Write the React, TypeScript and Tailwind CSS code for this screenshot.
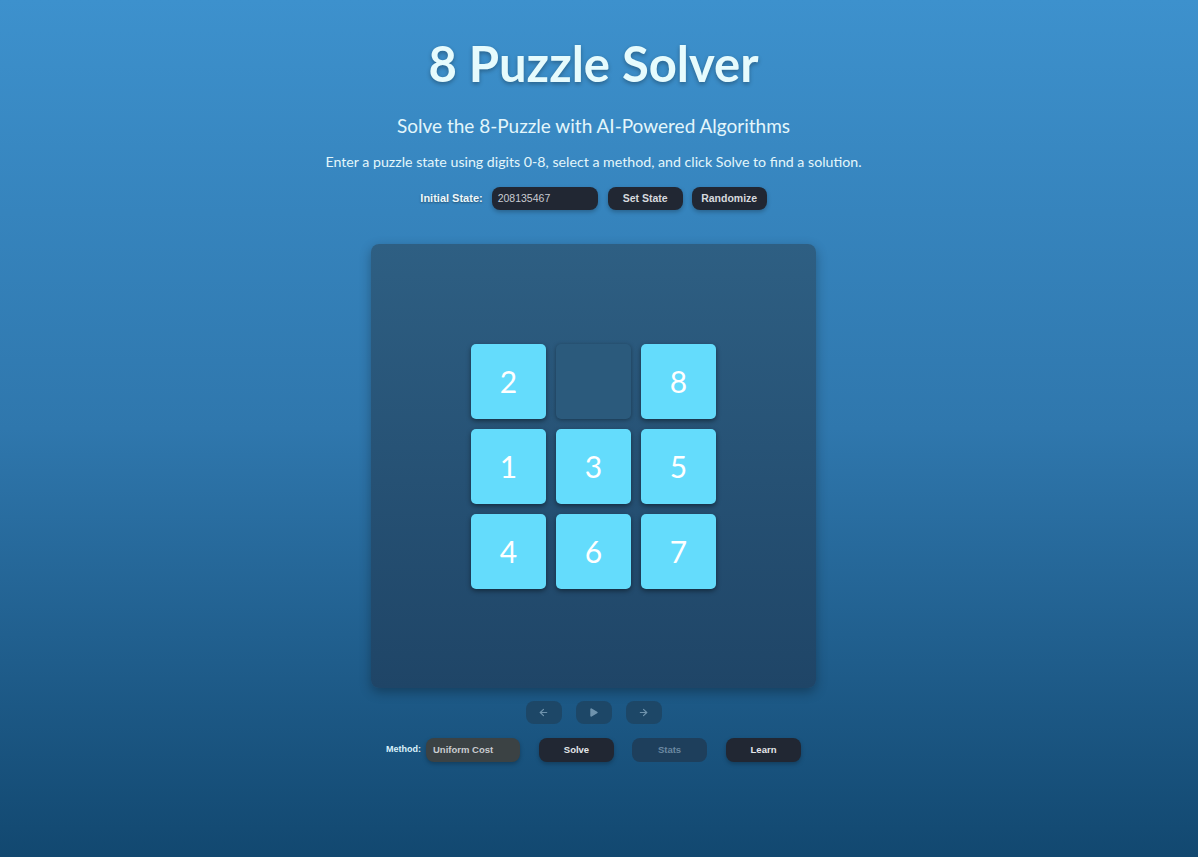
import { ArrowLeft, ArrowRight, Play } from "lucide-react";

const tiles = [2, 0, 8, 1, 3, 5, 4, 6, 7];

function Tile({ n }: { n: number }) {
  if (n === 0) {
    return <div className="w-[75px] h-[75px] rounded-[5px] bg-[#2b5a7c] shadow-[0_1px_4px_rgba(0,0,0,0.35)]" />;
  }
  return (
    <div className="w-[75px] h-[75px] rounded-[5px] bg-[#64dcfc] shadow-[0_2px_5px_rgba(0,0,0,0.45)] flex items-center justify-center text-white text-[30px] font-['Lato',sans-serif]">
      {n}
    </div>
  );
}

export default function App() {
  return (
    <div className="min-h-[857px] w-full pr-[11px] bg-gradient-to-b from-[#3d91cd] via-[#2f77ad] to-[#124870] flex flex-col items-center font-['Lato',sans-serif] text-[#e3f6fb]">
      <h1 className="mt-[34px] text-[49px] leading-[58px] font-bold text-[#e6fbfd] [text-shadow:0_2px_4px_rgba(0,0,0,0.3)]">
        8 Puzzle Solver
      </h1>
      <p className="mt-[21px] text-[19px] leading-[26px]">Solve the 8-Puzzle with AI-Powered Algorithms</p>
      <p className="mt-[13px] text-[14.2px] leading-[20px]">
        Enter a puzzle state using digits 0-8, select a method, and click Solve to find a solution.
      </p>

      <div className="mt-[15px] flex items-center font-['Liberation_Sans',Arial,sans-serif] text-[10.5px] font-bold">
        <span className="text-[11px] text-[#eef8fb] [text-shadow:0_1px_2px_rgba(0,0,0,0.4)]">Initial State:</span>
        <div className="ml-[9px] w-[106px] h-[23px] rounded-[8px] bg-[#212733] flex items-center px-[6px] font-normal text-[#c9ccd2] shadow-[0_2px_4px_rgba(0,0,0,0.25)]">
          208135467
        </div>
        <button className="ml-[10px] w-[75px] h-[23px] rounded-[8px] bg-[#212733] text-[#d6d9de] shadow-[0_2px_4px_rgba(0,0,0,0.25)]">
          Set State
        </button>
        <button className="ml-[9px] w-[75px] h-[23px] rounded-[8px] bg-[#212733] text-[#d6d9de] shadow-[0_2px_4px_rgba(0,0,0,0.25)]">
          Randomize
        </button>
      </div>

      <div className="mt-[34px] w-[445px] h-[444px] rounded-[8px] bg-gradient-to-b from-[#2e5f83] to-[#1f4567] shadow-[0_4px_12px_rgba(0,0,0,0.3)] flex items-center justify-center">
        <div className="grid grid-cols-3 gap-[10px]">
          {tiles.map((n, i) => (
            <Tile key={i} n={n} />
          ))}
        </div>
      </div>

      <div className="mt-[13px] flex gap-[14px]">
        <button className="w-[36px] h-[23px] rounded-[8px] bg-[#1d4767] flex items-center justify-center text-[#6f93ad]">
          <ArrowLeft size={11} strokeWidth={2.5} />
        </button>
        <button className="w-[36px] h-[23px] rounded-[8px] bg-[#1d4767] flex items-center justify-center text-[#6f93ad]">
          <Play size={11} fill="currentColor" strokeWidth={0} />
        </button>
        <button className="w-[36px] h-[23px] rounded-[8px] bg-[#1d4767] flex items-center justify-center text-[#6f93ad]">
          <ArrowRight size={11} strokeWidth={2.5} />
        </button>
      </div>

      <div className="mt-[14px] flex items-center font-['Liberation_Sans',Arial,sans-serif] text-[9.5px] font-bold">
        <span className="text-[9px] text-[#d9f2fb]">Method:</span>
        <div className="ml-[5px] w-[94px] h-[24px] rounded-[8px] bg-[#3b4244] flex items-center px-[7px] text-[#c9ccd0] shadow-[0_2px_4px_rgba(0,0,0,0.25)]">
          Uniform Cost
        </div>
        <button className="ml-[19px] w-[75px] h-[24px] rounded-[8px] bg-[#212733] text-[#e4e6ea] shadow-[0_2px_4px_rgba(0,0,0,0.25)]">
          Solve
        </button>
        <button className="ml-[18px] w-[75px] h-[24px] rounded-[8px] bg-[#1e3f5c] text-[#6b88a1]">
          Stats
        </button>
        <button className="ml-[19px] w-[75px] h-[24px] rounded-[8px] bg-[#212733] text-[#e4e6ea] shadow-[0_2px_4px_rgba(0,0,0,0.25)]">
          Learn
        </button>
      </div>
    </div>
  );
}
